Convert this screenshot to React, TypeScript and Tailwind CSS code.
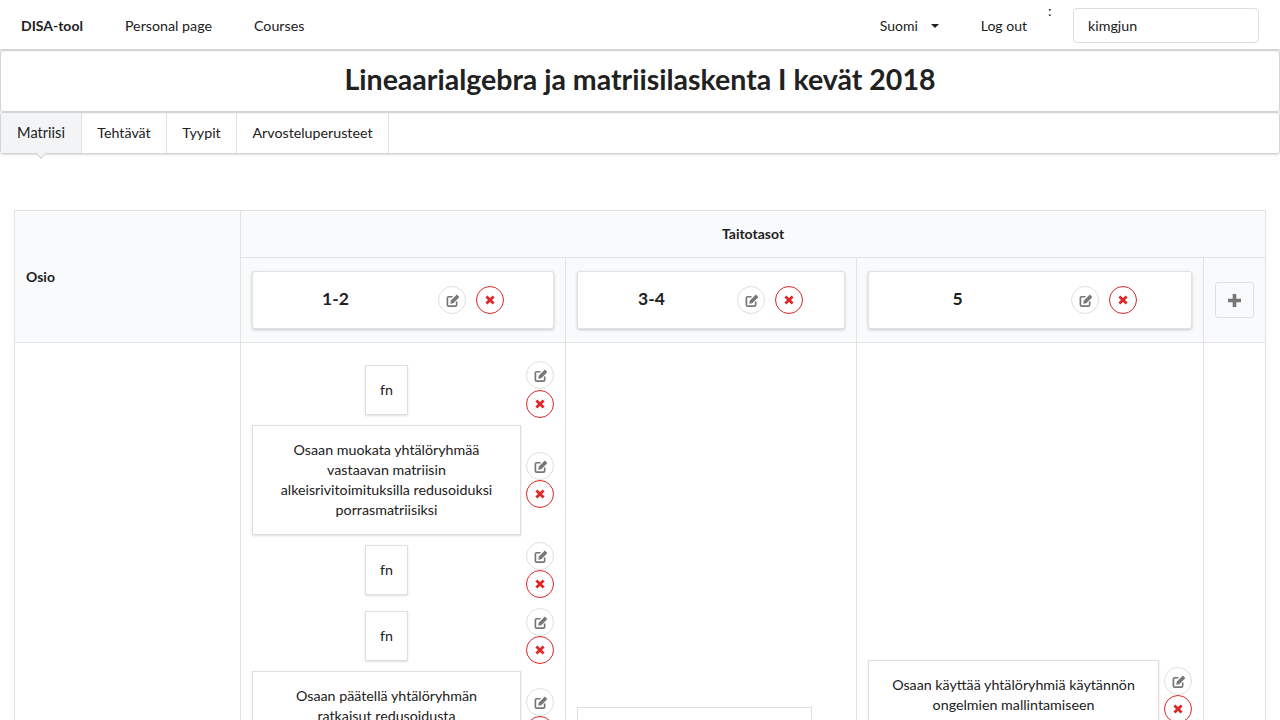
function EditIcon() {
  return (
    <svg width="13" height="13" viewBox="0 0 14 14" className="ml-px">
      <path
        d="M7 3H3a1.5 1.5 0 0 0-1.5 1.5v7A1.5 1.5 0 0 0 3 13h7a1.5 1.5 0 0 0 1.5-1.5V8"
        fill="none"
        stroke="#767676"
        strokeWidth="1.8"
      />
      <path d="M4.6 10.4l.5-3.2L11.7.6 14.4 3.3 7.8 9.9z" fill="#767676" />
    </svg>
  );
}

function CloseIcon() {
  return (
    <svg width="10" height="10" viewBox="0 0 10 10">
      <path d="M1.4 1.4l7.2 7.2M8.6 1.4L1.4 8.6" fill="none" stroke="#db2828" strokeWidth="2.8" />
    </svg>
  );
}

function RowButtons({ stackClass }: { stackClass: string }) {
  return (
    <div className={stackClass}>
      <button className="flex h-7 w-7 items-center justify-center rounded-full border border-[#e0e0e0] bg-white">
        <EditIcon />
      </button>
      <button className="flex h-7 w-7 items-center justify-center rounded-full border border-[#db2828] bg-white">
        <CloseIcon />
      </button>
    </div>
  );
}

function LevelCard({
  label,
  textClass,
  gapClass,
}: {
  label: string;
  textClass: string;
  gapClass: string;
}) {
  return (
    <div className="flex h-[58px] items-center rounded-[3px] border border-[#e2e2e2] bg-white shadow-[0_1px_3px_rgba(0,0,0,0.2)]">
      <div className={`text-center text-[17.5px] font-bold leading-none -mt-[3px] ${textClass}`}>{label}</div>
      <div className={gapClass}>
        <RowButtons stackClass="flex gap-[10px]" />
      </div>
    </div>
  );
}

function Goal({
  text,
  wide,
  loose,
  areaClass,
  className,
}: {
  text: string;
  wide?: boolean;
  loose?: boolean;
  areaClass: string;
  className?: string;
}) {
  return (
    <div className={`flex items-center gap-[5px] ${className ?? ""}`}>
      <div className={`flex shrink-0 justify-center ${areaClass}`}>
        <div
          className={`border border-[#dedede] bg-white py-[14px] text-center leading-5 shadow-[0_1px_2px_rgba(0,0,0,0.12)] ${
            wide ? "w-full px-5" : "px-[14px]"
          }`}
        >
          {text}
        </div>
      </div>
      <RowButtons stackClass={loose ? "flex w-7 shrink-0 flex-col gap-px" : "flex w-7 shrink-0 flex-col"} />
    </div>
  );
}

export default function App() {
  return (
    <div className="h-screen overflow-hidden bg-white font-['Lato','Open_Sans',sans-serif] text-[14.25px] text-[#212121]">
      <nav className="flex h-[50px] items-center border-b border-[#d4d4d5] pt-[2px] shadow-[0_1px_2px_rgba(0,0,0,0.1)]">
        <a className="px-[21px] text-[14px] font-bold">DISA-tool</a>
        <a className="px-[21px]">Personal page</a>
        <a className="px-[21px]">Courses</a>
        <div className="ml-auto flex items-center pr-[21px]">
          <a className="flex items-center px-[21px] text-[14px]">
            Suomi
            <svg className="ml-[13px]" width="8" height="4" viewBox="0 0 8 4">
              <polygon points="0,0 8,0 4,4" fill="#212121" />
            </svg>
          </a>
          <a className="px-[21px] text-[14px]">Log out</a>
          <span className="-mt-[30px] w-[25px] text-[14px] leading-none">:</span>
          <input
            readOnly
            value="kimgjun"
            className="h-[35px] w-[186px] rounded-[4px] border border-[#dedede] px-[14px] outline-none"
          />
        </div>
      </nav>

      <div className="flex h-[62px] items-center justify-center rounded-[3px] border border-[#d4d4d5] pb-[3px] shadow-[0_1px_2px_rgba(34,36,38,0.15)]">
        <h1 className="text-[28.5px] font-bold leading-none">Lineaarialgebra ja matriisilaskenta I kevät 2018</h1>
      </div>

      <div className="flex h-[42px] rounded-[3px] border border-[#d4d4d5] shadow-[0_1px_2px_rgba(34,36,38,0.15)]">
        <a className="relative flex w-[81px] items-center justify-center border-r border-[#e2e2e2] bg-[#f3f4f5] text-[14.6px]">
          Matriisi
          <span className="absolute -bottom-[4px] left-1/2 h-2 w-2 -translate-x-1/2 rotate-45 border-r border-b border-[#d4d4d5] bg-[#f3f4f5]" />
        </a>
        <a className="flex w-[85px] items-center justify-center border-r border-[#e2e2e2]">Tehtävät</a>
        <a className="flex w-[70px] items-center justify-center border-r border-[#e2e2e2]">Tyypit</a>
        <a className="flex w-[152px] items-center justify-center border-r border-[#e2e2e2]">Arvosteluperusteet</a>
      </div>

      <div className="mx-[14px] mt-[56px]">
        <table className="w-[1252px] table-fixed border-separate border-spacing-0 border border-[#e2e2e2]">
          <colgroup>
            <col className="w-[225px]" />
            <col className="w-[325px]" />
            <col className="w-[291px]" />
            <col className="w-[347px]" />
            <col className="w-[62px]" />
          </colgroup>
          <thead>
            <tr className="bg-[#f9fafb]">
              <th rowSpan={2} className="px-[11px] text-left text-[14px] font-bold">
                Osio
              </th>
              <th colSpan={4} className="h-[46px] border-l border-[#e2e2e2] pb-[2px] text-[14px] font-bold">
                Taitotasot
              </th>
            </tr>
            <tr className="bg-[#f9fafb]">
              <th className="h-[85px] border-t border-l border-[#e2e2e2] px-[11px] font-normal">
                <LevelCard label="1-2" textClass="w-[165px]" gapClass="ml-[20px]" />
              </th>
              <th className="border-t border-l border-[#e2e2e2] px-[11px] font-normal">
                <LevelCard label="3-4" textClass="w-[147px]" gapClass="ml-[12px]" />
              </th>
              <th className="border-t border-l border-[#e2e2e2] px-[11px] font-normal">
                <LevelCard label="5" textClass="w-[177px]" gapClass="ml-[25px]" />
              </th>
              <th className="border-t border-l border-[#e2e2e2] px-[11px] font-normal">
                <button className="flex h-9 w-[39px] items-center justify-center rounded-[3px] border border-[#e0e0e0] bg-[#f9fafb]">
                  <svg width="13" height="13" viewBox="0 0 13 13">
                    <path d="M6.5 0v13M0 6.5h13" fill="none" stroke="#767676" strokeWidth="3.6" />
                  </svg>
                </button>
              </th>
            </tr>
          </thead>
          <tbody>
            <tr>
              <td className="h-[800px] border-t border-[#e2e2e2]" />
              <td className="border-t border-l border-[#e2e2e2] px-[11px] pt-[18px] align-top">
                <Goal loose text="fn" areaClass="w-[269px]" />
                <Goal
                  wide
                  className="mt-[7px]"
                  areaClass="w-[269px]"
                  text="Osaan muokata yhtälöryhmää vastaavan matriisin alkeisrivitoimituksilla redusoiduksi porrasmatriisiksi"
                />
                <Goal text="fn" className="mt-[7px]" areaClass="w-[269px]" />
                <Goal text="fn" className="mt-[10px]" areaClass="w-[269px]" />
                <Goal
                  wide
                  className="mt-[7px]"
                  areaClass="w-[269px]"
                  text="Osaan päätellä yhtälöryhmän ratkaisut redusoidusta porrasmatriisista"
                />
              </td>
              <td className="border-t border-l border-[#e2e2e2] px-[11px] pt-[364px] align-top">
                <div className="h-[90px] w-[235px] border border-[#dedede] bg-white" />
              </td>
              <td className="border-t border-l border-[#e2e2e2] px-[11px] pt-[317px] align-top">
                <Goal wide areaClass="w-[291px]" text="Osaan käyttää yhtälöryhmiä käytännön ongelmien mallintamiseen" />
              </td>
              <td className="border-t border-l border-[#e2e2e2]" />
            </tr>
          </tbody>
        </table>
      </div>
    </div>
  );
}
